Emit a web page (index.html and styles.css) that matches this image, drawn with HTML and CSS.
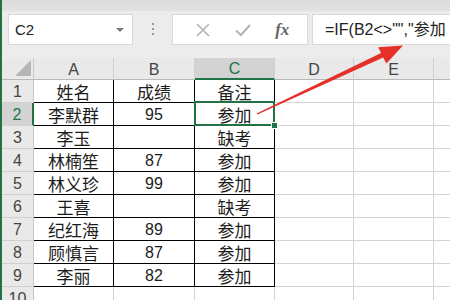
FILE: index.html
```html
<!DOCTYPE html>
<html lang="zh-CN">
<head>
  <meta charset="UTF-8"/>
  <title>Excel IF</title>
  <link rel="stylesheet" href="styles.css">
</head>
<body>
  <div class="app">
    <!-- name box + formula bar -->
    <div class="toolbar">
      <div class="namebox">
        <span>C2</span>
        <span class="caret"></span>
      </div>
      <div class="grip"><i></i><i></i><i></i></div>
      <div class="fbuttons">
        <svg class="icon" width="16" height="16" viewBox="0 0 16 16">
          <path d="M2 2 L14 14 M14 2 L2 14" stroke="#b3b3b3" stroke-width="1.6" fill="none"/>
        </svg>
        <svg class="icon" width="18" height="16" viewBox="0 0 18 16">
          <path d="M2 8.5 L7 13 L16 3" stroke="#b3b3b3" stroke-width="2" fill="none"/>
        </svg>
        <span class="fx">fx</span>
      </div>
      <div class="formula">=IF(B2&lt;&gt;"","参加</div>
    </div>

    <!-- sheet -->
    <div class="sheet">
      <div class="corner"><span class="tri"></span></div>
      <div class="colhead">A</div>
      <div class="colhead">B</div>
      <div class="colhead sel">C</div>
      <div class="colhead">D</div>
      <div class="colhead">E</div>
      <div class="colhead last"></div>

      <div class="rowhead">1</div>
      <div class="cell d">姓名</div><div class="cell d">成绩</div><div class="cell d">备注</div>
      <div class="cell"></div><div class="cell"></div><div class="cell last"></div>

      <div class="rowhead sel">2</div>
      <div class="cell d">李默群</div><div class="cell d num">95</div><div class="cell d active">参加</div>
      <div class="cell"></div><div class="cell"></div><div class="cell last"></div>

      <div class="rowhead">3</div>
      <div class="cell d">李玉</div><div class="cell d num"></div><div class="cell d">缺考</div>
      <div class="cell"></div><div class="cell"></div><div class="cell last"></div>

      <div class="rowhead">4</div>
      <div class="cell d">林楠笙</div><div class="cell d num">87</div><div class="cell d">参加</div>
      <div class="cell"></div><div class="cell"></div><div class="cell last"></div>

      <div class="rowhead">5</div>
      <div class="cell d">林义珍</div><div class="cell d num">99</div><div class="cell d">参加</div>
      <div class="cell"></div><div class="cell"></div><div class="cell last"></div>

      <div class="rowhead">6</div>
      <div class="cell d">王喜</div><div class="cell d num"></div><div class="cell d">缺考</div>
      <div class="cell"></div><div class="cell"></div><div class="cell last"></div>

      <div class="rowhead">7</div>
      <div class="cell d">纪红海</div><div class="cell d num">89</div><div class="cell d">参加</div>
      <div class="cell"></div><div class="cell"></div><div class="cell last"></div>

      <div class="rowhead">8</div>
      <div class="cell d">顾慎言</div><div class="cell d num">87</div><div class="cell d">参加</div>
      <div class="cell"></div><div class="cell"></div><div class="cell last"></div>

      <div class="rowhead">9</div>
      <div class="cell d">李丽</div><div class="cell d num">82</div><div class="cell d">参加</div>
      <div class="cell"></div><div class="cell"></div><div class="cell last"></div>

      <div class="rowhead">10</div>
      <div class="cell"></div><div class="cell"></div><div class="cell"></div>
      <div class="cell"></div><div class="cell"></div><div class="cell last"></div>
    </div>

    <!-- red pointer arrow over the sheet -->
    <svg class="arrow" width="450" height="300" viewBox="0 0 450 300">
      <polygon fill="#e5302a"
        points="256.6,113.4 381,53.1 378.2,47.2 403,45.5 386.4,63.6 383.2,57.6 257.4,114.6"/>
    </svg>
  </div>
</body>
</html>
```

FILE: styles.css
```css
/* page */
html, body {
  margin: 0; padding: 0;
  width: 100%; height: 100%;
  overflow: hidden;
  background: #fff;
  font-family: "Liberation Sans", "Noto Sans CJK SC", sans-serif;
}

.app {
  position: relative;
  height: 100%;
  border-left: 2px solid #217346;
}

/* toolbar: name box, grip, buttons, formula */
.toolbar {
  display: flex;
  align-items: flex-start;
  height: 58px;
  box-sizing: border-box;
  padding-top: 14px;
  background: linear-gradient(#dcdcdc 0, #e2e2e2 11px, #ececec 11px);
}

.namebox {
  display: flex;
  align-items: center;
  justify-content: space-between;
  width: 125px;
  height: 31px;
  margin-left: 6px;
  padding: 0 8px 0 6px;
  box-sizing: border-box;
  background: #fff;
  border: 1px solid #dadada;
  font-size: 15px;
  color: #222;
}
.caret {
  width: 0; height: 0;
  border-left: 4px solid transparent;
  border-right: 4px solid transparent;
  border-top: 4px solid #777;
}

.grip {
  display: flex;
  flex-direction: column;
  gap: 3px;
  width: 39px;
  align-items: center;
  padding-top: 9px;
}
.grip i {
  width: 2px; height: 2px;
  background: #9a9a9a;
}

.fbuttons {
  display: flex;
  align-items: center;
  justify-content: space-around;
  width: 136px;
  height: 31px;
  box-sizing: border-box;
  padding: 0 6px 0 10px;
  background: #fff;
  border: 1px solid #dadada;
}
.fx {
  font-family: "Liberation Serif", serif;
  font-style: italic;
  font-weight: bold;
  font-size: 17px;
  color: #666;
}

.formula {
  flex: 1;
  height: 31px;
  margin-left: 4px;
  padding-left: 12px;
  box-sizing: border-box;
  background: #fff;
  border: 1px solid #dadada;
  border-right: none;
  font-size: 16px;
  line-height: 29px;
  color: #222;
  white-space: nowrap;
  overflow: hidden;
}

/* sheet grid */
.sheet {
  display: grid;
  grid-template-columns: 32px 80px 81px 80px 79px 80px 1fr;
  grid-template-rows: 22px repeat(10, 23px);
}

.corner, .colhead, .rowhead {
  background: #e9e9e9;
  color: #444;
  font-size: 16px;
  box-sizing: border-box;
  display: flex;
  align-items: center;
  justify-content: center;
}
.corner {
  position: relative;
  border-right: 1px solid #c8c8c8;
  border-bottom: 1px solid #b8b8b8;
}
.tri {
  position: absolute;
  right: 2px; bottom: 3px;
  width: 0; height: 0;
  border-left: 16px solid transparent;
  border-bottom: 16px solid #b5b5b5;
}
.colhead {
  border-right: 1px solid #cfcfcf;
  border-bottom: 1px solid #b8b8b8;
  padding-top: 2px;
}
.colhead.sel {
  background: #d3d3d3;
  color: #217346;
  border-bottom: 2px solid #217346;
}
.colhead.last { border-right: none; }

.rowhead {
  border-right: 1px solid #c8c8c8;
  border-bottom: 1px solid #d0d0d0;
  padding-top: 2px;
}
.rowhead.sel {
  background: #d3d3d3;
  color: #217346;
  border-right: 2px solid #217346;
}

.cell {
  box-sizing: border-box;
  border-right: 1px solid #d4d4d4;
  border-bottom: 1px solid #d4d4d4;
  display: flex;
  align-items: center;
  justify-content: center;
  padding-top: 1px;
  font-size: 17px;
  color: #1c1c1c;
}
.cell.d {
  border-right-color: #000;
  border-bottom-color: #000;
}
.cell.num { font-size: 16px; }
.cell.last { border-right: none; }

/* selected cell C2 */
.cell.active { position: relative; }
.cell.active::after {
  content: "";
  position: absolute;
  top: -2px; left: -1px; right: -1px; bottom: -1px;
  border: 2px solid #217346;
}
.cell.active::before {
  content: "";
  position: absolute;
  right: -4px; bottom: -4px;
  width: 5px; height: 5px;
  background: #217346;
  border: 1px solid #fff;
  z-index: 1;
}

/* pointer arrow */
.arrow {
  position: absolute;
  left: -2px; top: 0;
  pointer-events: none;
}
```
